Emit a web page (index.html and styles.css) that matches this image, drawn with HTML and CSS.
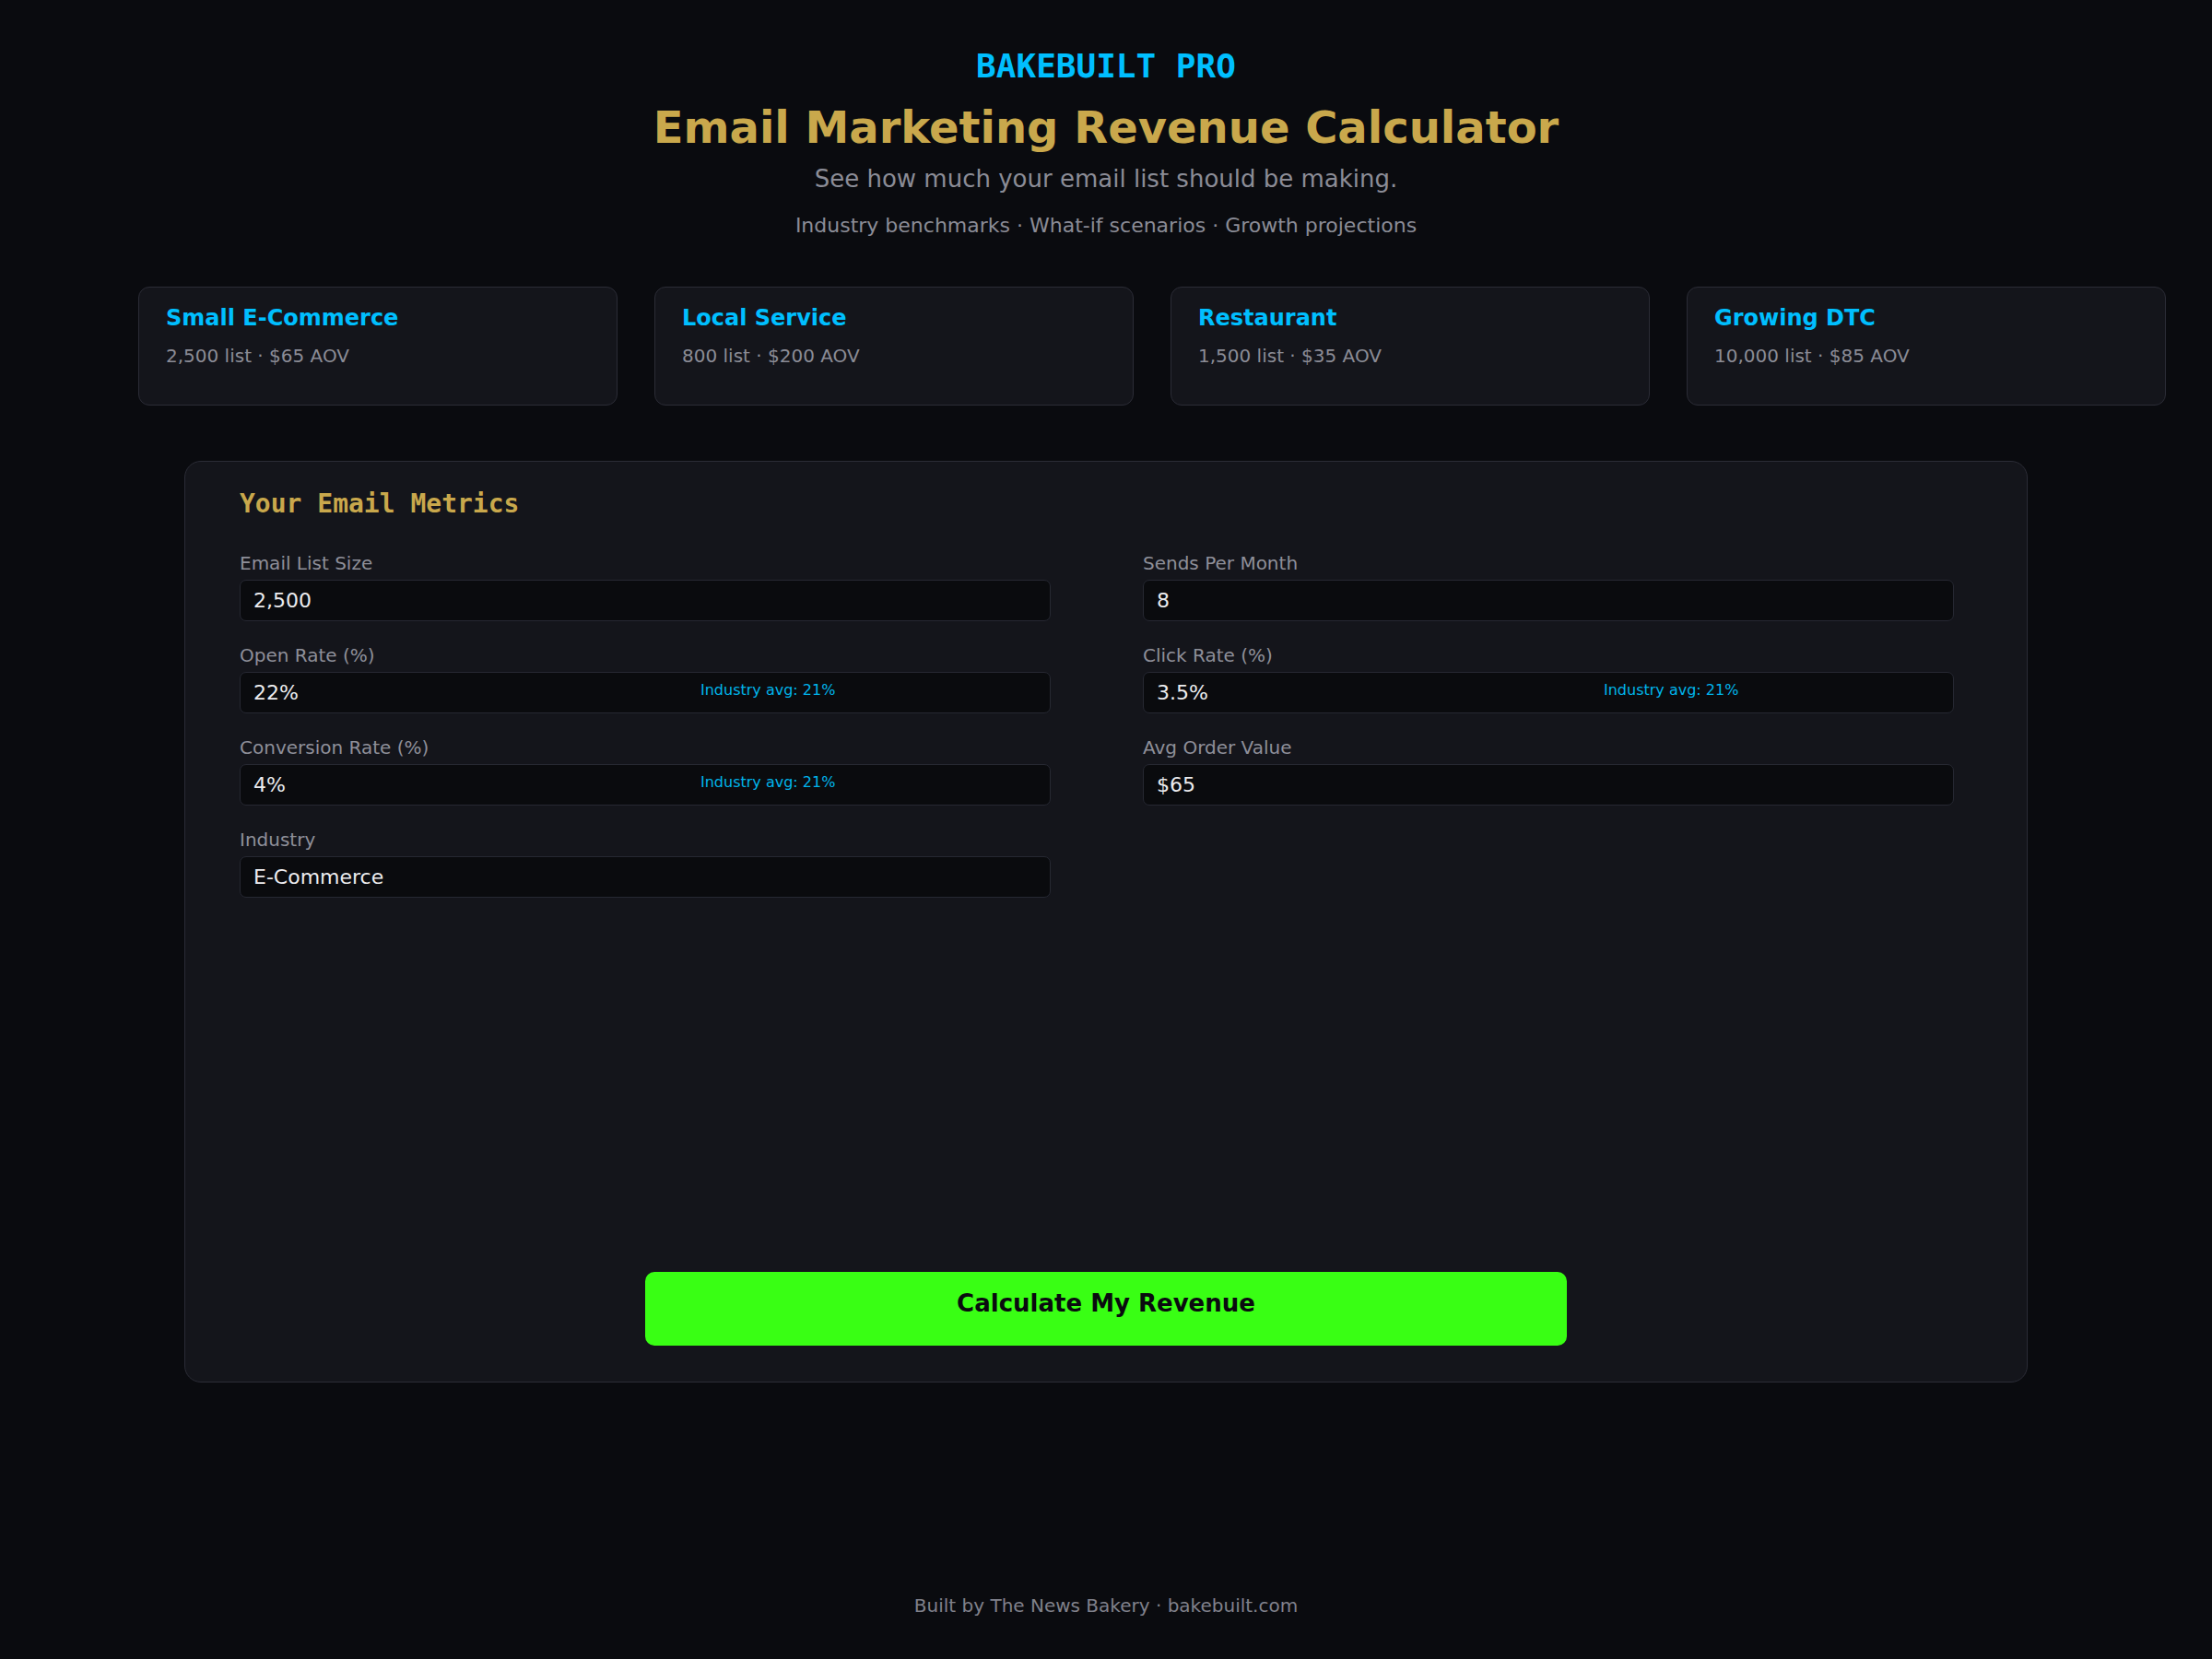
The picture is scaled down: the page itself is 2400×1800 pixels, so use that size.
FILE: index.html
```html
<!DOCTYPE html>
<html lang="en">
<head>
<meta charset="utf-8">
<title>Email Marketing Revenue Calculator</title>
<link rel="stylesheet" href="styles.css">
</head>
<body>
  <header class="hero">
    <div class="brand">BAKEBUILT PRO</div>
    <h1 class="title">Email Marketing Revenue Calculator</h1>
    <p class="subtitle">See how much your email list should be making.</p>
    <p class="tagline">Industry benchmarks · What-if scenarios · Growth projections</p>
  </header>

  <section class="presets">
    <div class="preset">
      <div class="preset-name">Small E-Commerce</div>
      <div class="preset-meta">2,500 list · $65 AOV</div>
    </div>
    <div class="preset">
      <div class="preset-name">Local Service</div>
      <div class="preset-meta">800 list · $200 AOV</div>
    </div>
    <div class="preset">
      <div class="preset-name">Restaurant</div>
      <div class="preset-meta">1,500 list · $35 AOV</div>
    </div>
    <div class="preset">
      <div class="preset-name">Growing DTC</div>
      <div class="preset-meta">10,000 list · $85 AOV</div>
    </div>
  </section>

  <main class="panel">
    <h2 class="panel-title">Your Email Metrics</h2>
    <div class="fields">
      <div class="field">
        <label class="label">Email List Size</label>
        <div class="input-wrap"><div class="input">2,500</div></div>
      </div>
      <div class="field">
        <label class="label">Sends Per Month</label>
        <div class="input-wrap"><div class="input">8</div></div>
      </div>
      <div class="field">
        <label class="label">Open Rate (%)</label>
        <div class="input-wrap"><div class="input">22%</div><span class="hint">Industry avg: 21%</span></div>
      </div>
      <div class="field">
        <label class="label">Click Rate (%)</label>
        <div class="input-wrap"><div class="input">3.5%</div><span class="hint">Industry avg: 21%</span></div>
      </div>
      <div class="field">
        <label class="label">Conversion Rate (%)</label>
        <div class="input-wrap"><div class="input">4%</div><span class="hint">Industry avg: 21%</span></div>
      </div>
      <div class="field">
        <label class="label">Avg Order Value</label>
        <div class="input-wrap"><div class="input">$65</div></div>
      </div>
      <div class="field">
        <label class="label">Industry</label>
        <div class="input-wrap"><div class="input">E-Commerce</div></div>
      </div>
    </div>
    <button class="cta">Calculate My Revenue</button>
  </main>

  <footer class="footer">Built by The News Bakery · bakebuilt.com</footer>
</body>
</html>
```

FILE: styles.css
```css
* { box-sizing: border-box; }

html, body {
  margin: 0;
  padding: 0;
  background: #0a0b0f;
}

body {
  font-family: "DejaVu Sans", "Liberation Sans", sans-serif;
  color: #e6e6e8;
  min-height: 1800px;
  width: 2400px;
}

.hero {
  text-align: center;
  padding-top: 51px;
}

.brand {
  font-family: "DejaVu Sans Mono", "Liberation Mono", monospace;
  font-weight: bold;
  font-size: 36px;
  color: #00bfff;
  line-height: normal;
}

.title {
  margin: 18px 0 0;
  font-size: 48px;
  font-weight: bold;
  color: #c9a84c;
  line-height: normal;
}

.subtitle {
  margin: 13px 0 0;
  font-size: 26px;
  color: #8b8c96;
  line-height: normal;
}

.tagline {
  margin: 23px 0 0;
  font-size: 22px;
  color: #8b8c96;
  line-height: normal;
}

.presets {
  display: grid;
  grid-template-columns: repeat(4, 520px);
  gap: 40px;
  width: 2200px;
  margin: 54px 0 0 150px;
}

.preset {
  background: #14151b;
  border: 1px solid #2b2c36;
  border-radius: 12px;
  padding: 19px 29px 41px;
}

.preset-name {
  font-size: 24px;
  font-weight: bold;
  color: #00bfff;
  line-height: normal;
}

.preset-meta {
  margin-top: 15px;
  font-size: 20px;
  color: #8b8c96;
  line-height: normal;
}

.panel {
  display: flex;
  flex-direction: column;
  width: 2000px;
  height: 1000px;
  margin: 60px auto 0;
  background: #14151b;
  border: 1px solid #2b2c36;
  border-radius: 18px;
  padding: 29px 59px 39px;
}

.panel-title {
  margin: 0 0 36px;
  font-family: "DejaVu Sans Mono", "Liberation Mono", monospace;
  font-weight: bold;
  font-size: 28px;
  color: #c9a84c;
  line-height: normal;
}

.fields {
  display: grid;
  grid-template-columns: 1fr 1fr;
  column-gap: 80px;
  row-gap: 25px;
}

.label {
  display: block;
  font-size: 20px;
  line-height: 24px;
  color: #8e8f99;
  margin-bottom: 6px;
}

.input-wrap {
  position: relative;
  width: calc(100% - 20px);
}

.input {
  height: 45px;
  background: #0a0b0e;
  border: 1px solid #262832;
  border-radius: 7px;
  padding: 0 14px;
  display: flex;
  align-items: center;
  font-size: 22px;
  color: #ececee;
}

.hint {
  position: absolute;
  left: 500px;
  top: 10px;
  font-size: 16px;
  line-height: normal;
  color: #00b4ea;
}

.cta {
  margin-top: auto;
  align-self: center;
  width: 1000px;
  height: 80px;
  border: none;
  border-radius: 10px;
  background: #39ff14;
  color: #0a0b0f;
  font-family: "DejaVu Sans", "Liberation Sans", sans-serif;
  font-weight: bold;
  font-size: 26px;
  line-height: normal;
  padding: 19px 0 0;
  display: flex;
  justify-content: center;
  align-items: flex-start;
}

.footer {
  margin-top: 230px;
  text-align: center;
  font-size: 20px;
  line-height: normal;
  color: #80818b;
}
```
